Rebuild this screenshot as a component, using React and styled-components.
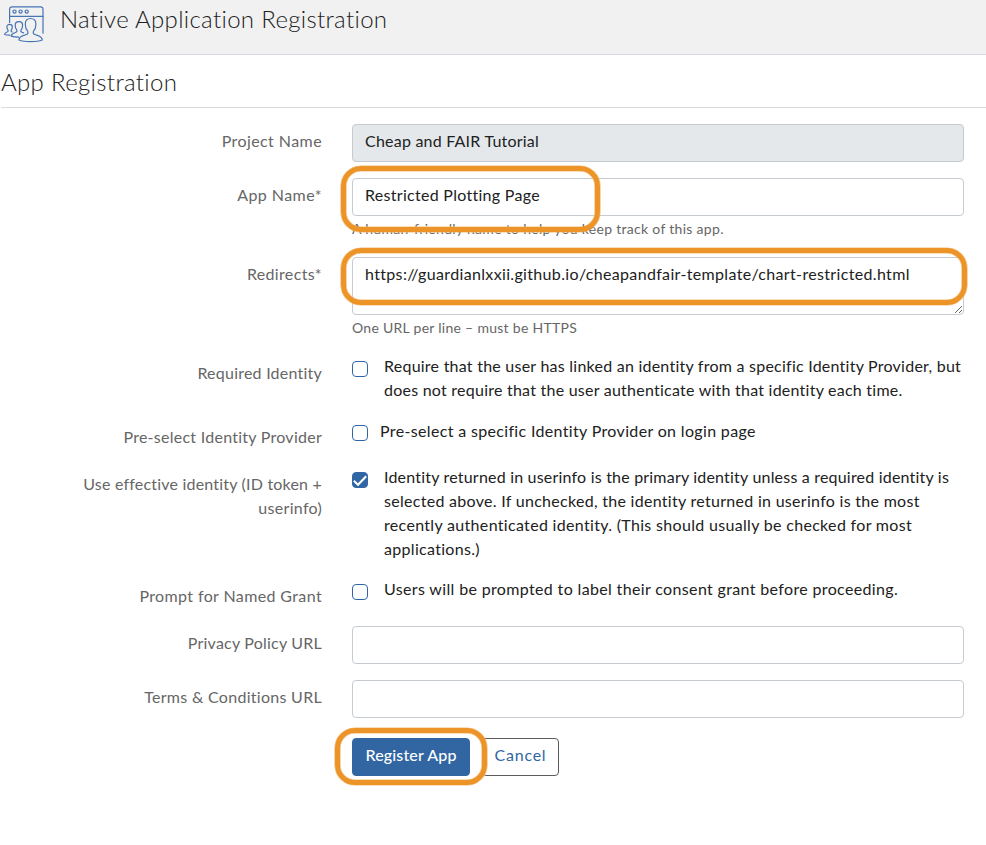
import React from "react";
import styled, { createGlobalStyle } from "styled-components";

const GlobalStyle = createGlobalStyle`
  * { box-sizing: border-box; }
  body {
    margin: 0;
    background: #fff;
    color: #212121;
    font: 400 16px/24px Lato, "Open Sans", sans-serif;
  }
`;

const Page = styled.main`
  min-height: 845px;
  background: #fff;
`;

const Header = styled.header`
  display: flex;
  align-items: flex-start;
  height: 55px;
  padding: 5px 0 0 4px;
  background: #f1f1f1;
  border-bottom: 1px solid #dadbe2;
`;

const AppIcon = styled.svg`
  width: 41px;
  height: 38px;
  flex: none;
`;

const Title = styled.h1`
  margin: -1px 0 0 15px;
  font-size: 24px;
  font-weight: 300;
  line-height: 29px;
  letter-spacing: 0.33px;
`;

const SectionTitle = styled.h2`
  height: 53px;
  margin: 0 0 0 1px;
  padding-top: 12px;
  border-bottom: 1px solid #d9dadd;
  font-size: 24px;
  font-weight: 300;
  line-height: 30px;
  letter-spacing: 0.34px;
`;

const Form = styled.form`
  display: flex;
  flex-direction: column;
  padding-top: 16px;
`;

const FormRow = styled.div`
  display: grid;
  grid-template-columns: 322px 612px;
  column-gap: 30px;
  height: ${(p) => p.$height}px;
`;

const Label = styled.label`
  padding-top: ${(p) => p.$top ?? 5}px;
  color: #666;
  text-align: right;
`;

const Line = styled.span`
  display: block;
  white-space: nowrap;
  letter-spacing: ${(p) => p.$spacing}px;
`;

const Field = styled.div`
  position: relative;
`;

const Input = styled.input`
  display: block;
  width: 100%;
  height: 38px;
  padding: 3px 12px 9px;
  border: 1px solid #c6cad1;
  border-radius: 4px;
  outline: none;
  background: ${(p) => (p.readOnly ? "#e4e8eb" : "#fff")};
  color: #212121;
  font: inherit;
  letter-spacing: ${(p) => p.$spacing ?? 0}px;
`;

const TextArea = styled.textarea`
  display: block;
  width: 100%;
  height: 58px;
  padding: 4px 12px;
  border: 1px solid #c6cad1;
  border-radius: 4px;
  outline: none;
  overflow: hidden;
  resize: vertical;
  color: #212121;
  font: inherit;
  letter-spacing: 0.34px;
`;

const Help = styled.small`
  display: block;
  margin-top: 2px;
  color: #666;
  font-size: 14px;
  line-height: 21px;
`;

const Choice = styled.div`
  display: flex;
  align-items: flex-start;
  gap: ${(p) => p.$gap ?? 16}px;
`;

const ChoiceText = styled.div`
  margin-top: -1px;
`;

const CheckBox = styled.span`
  display: grid;
  place-items: center;
  flex: none;
  width: 16px;
  height: 16px;
  margin-top: ${(p) => p.$top ?? 6}px;
  border: 1px solid #3067a8;
  border-radius: 4px;
  background: ${(p) => (p.$checked ? "#3166a3" : "#fff")};
`;

const Tick = styled.svg`
  width: 14px;
  height: 14px;
`;

const Actions = styled.div`
  position: relative;
  display: flex;
  gap: 12px;
  margin-left: 352px;
`;

const Button = styled.button`
  width: ${(p) => (p.$primary ? 118 : 77)}px;
  height: 38px;
  padding: 0 0 4px;
  border: 1px solid ${(p) => (p.$primary ? "#3166a3" : "#5c5c5c")};
  border-radius: 4px;
  background: ${(p) => (p.$primary ? "#3166a3" : "#fff")};
  color: ${(p) => (p.$primary ? "#fff" : "#3166a3")};
  font: inherit;
  font-weight: ${(p) => (p.$primary ? 500 : 400)};
  letter-spacing: ${(p) => (p.$primary ? 0.15 : 0.75)}px;
`;

const Highlight = styled.div`
  position: absolute;
  z-index: 1;
  left: ${(p) => p.$left}px;
  top: ${(p) => p.$top}px;
  width: ${(p) => p.$width}px;
  height: ${(p) => p.$height}px;
  border: 5px solid #ed9428;
  border-radius: 20px;
  box-shadow: 0 0 0 0.6px #f2bd77, inset 0 0 0 0.6px #f2bd77;
  pointer-events: none;
`;

function CheckRow({ height, label, lines, checked, gap, boxTop, labelTop = 6 }) {
  return (
    <FormRow $height={height}>
      <Label $top={labelTop}>
        {label.map(([text, spacing]) => (
          <Line key={text} $spacing={spacing}>{text}</Line>
        ))}
      </Label>
      <Choice $gap={gap}>
        <CheckBox $checked={checked} $top={boxTop} role="checkbox" aria-checked={!!checked}>
          {checked && (
            <Tick viewBox="1 1 14 14" fill="none" stroke="#fff" strokeWidth="2.1">
              <path d="M1.8 8.800 6 12.700 14.200 4.200" />
            </Tick>
          )}
        </CheckBox>
        <ChoiceText>
          {lines.map(([text, spacing]) => (
            <Line key={text} $spacing={spacing}>{text}</Line>
          ))}
        </ChoiceText>
      </Choice>
    </FormRow>
  );
}

export default function App() {
  return (
    <Page>
      <GlobalStyle />
      <Header>
        <AppIcon viewBox="0 0 41 38" fill="none" stroke="#4774b5" strokeWidth="1.2" strokeLinejoin="round" strokeLinecap="round">
          <path d="M5.600 17.500V4.200a2.400 2.400 0 0 1 2.400-2.400h28.600A2.400 2.400 0 0 1 39 4.200v24" />
          <path d="M5.600 11.300H39" />
          <circle cx="10.500" cy="6.600" r="1.600" />
          <circle cx="16.600" cy="6.600" r="1.600" />
          <circle cx="22.700" cy="6.600" r="1.600" />
          <path d="M23.700 26.200c-1.800-1.800-2.400-4.300-2.400-7 0-3.600 2.100-5.700 5.300-5.700s5.300 2.100 5.300 5.700c0 2.700-.6 5.200-2.400 7-.7 2.200.1 3 2 3.600 3 1 6.600 1.600 6.800 5.200-5.400 2.200-18 2.200-23.400 0 .2-3.600 3.800-4.200 6.800-5.200 1.900-.6 2.700-1.400 2-3.600z" />
          <path d="M18.600 20.200c0-2.300-1.400-3.600-3.700-3.600s-3.700 1.300-3.700 3.600c0 1.900.4 3.500 1.600 4.800.5 1.600-.1 2.100-1.400 2.500-2 .700-4 1.100-4.200 3.600 1.900.7 4.700 1.100 7.400 1.100M18.600 20.200c0 1.900-.4 3.500-1.600 4.800-.5 1.600.1 2.100 1.400 2.500l1.200.4" />
          <path d="M8.300 22c0-1.700-1-2.600-2.700-2.600s-2.700.9-2.700 2.600c0 1.400.4 2.400 1.200 3.300.3 1.100-.1 1.400-1 1.700-1.400.5-2.400.9-2.500 2.500 1.300.5 3.100.7 5.300.7M8.300 22c0 1.400-.4 2.400-1.200 3.300-.3 1.100.1 1.400 1 1.700" />
        </AppIcon>
        <Title>Native Application Registration</Title>
      </Header>
      <SectionTitle>App Registration</SectionTitle>

      <Form>
        <FormRow $height={54}>
          <Label><Line $spacing={0.42}>Project Name</Line></Label>
          <Field><Input readOnly defaultValue="Cheap and FAIR Tutorial" $spacing={0.22} /></Field>
        </FormRow>
        <FormRow $height={79}>
          <Label><Line $spacing={0.45}>App Name*</Line></Label>
          <Field>
            <Input defaultValue="Restricted Plotting Page" $spacing={0.29} />
            <Help><Line $spacing={0.3}>A human-friendly name to help you keep track of this app.</Line></Help>
            <Highlight $left={-11} $top={-12} $width={259} $height={66} />
          </Field>
        </FormRow>
        <FormRow $height={98}>
          <Label><Line $spacing={0.34}>Redirects*</Line></Label>
          <Field>
            <TextArea defaultValue="https://guardianlxxii.github.io/cheapandfair-template/chart-restricted.html" />
            <Help><Line $spacing={0.28}>One URL per line – must be HTTPS</Line></Help>
            <Highlight $left={-11} $top={-9} $width={626} $height={57} />
          </Field>
        </FormRow>

        <CheckRow
          height={65}
          label={[["Required Identity", 0.23]]}
          lines={[
            ["Require that the user has linked an identity from a specific Identity Provider, but", 0.24],
            ["does not require that the user authenticate with that identity each time.", 0.24],
          ]}
        />
        <CheckRow
          height={46}
          gap={12}
          boxTop={5}
          labelTop={5}
          label={[["Pre-select Identity Provider", 0.26]]}
          lines={[["Pre-select a specific Identity Provider on login page", 0.34]]}
        />
        <CheckRow
          height={112}
          checked
          label={[["Use effective identity (ID token +", 0.2], ["userinfo)", 0.3]]}
          lines={[
            ["Identity returned in userinfo is the primary identity unless a required identity is", 0.2],
            ["selected above. If unchecked, the identity returned in userinfo is the most", 0.29],
            ["recently authenticated identity. (This should usually be checked for most", 0.32],
            ["applications.)", 0.31],
          ]}
        />
        <CheckRow
          height={48}
          label={[["Prompt for Named Grant", 0.38]]}
          lines={[["Users will be prompted to label their consent grant before proceeding.", 0.35]]}
        />

        <FormRow $height={54}>
          <Label><Line $spacing={0.22}>Privacy Policy URL</Line></Label>
          <Field><Input /></Field>
        </FormRow>
        <FormRow $height={58}>
          <Label><Line $spacing={0.29}>Terms &amp; Conditions URL</Line></Label>
          <Field><Input /></Field>
        </FormRow>
        <Actions>
          <Button type="button" $primary>Register App</Button>
          <Button type="button">Cancel</Button>
          <Highlight $left={-17} $top={-10} $width={152} $height={57} />
        </Actions>
      </Form>
    </Page>
  );
}
